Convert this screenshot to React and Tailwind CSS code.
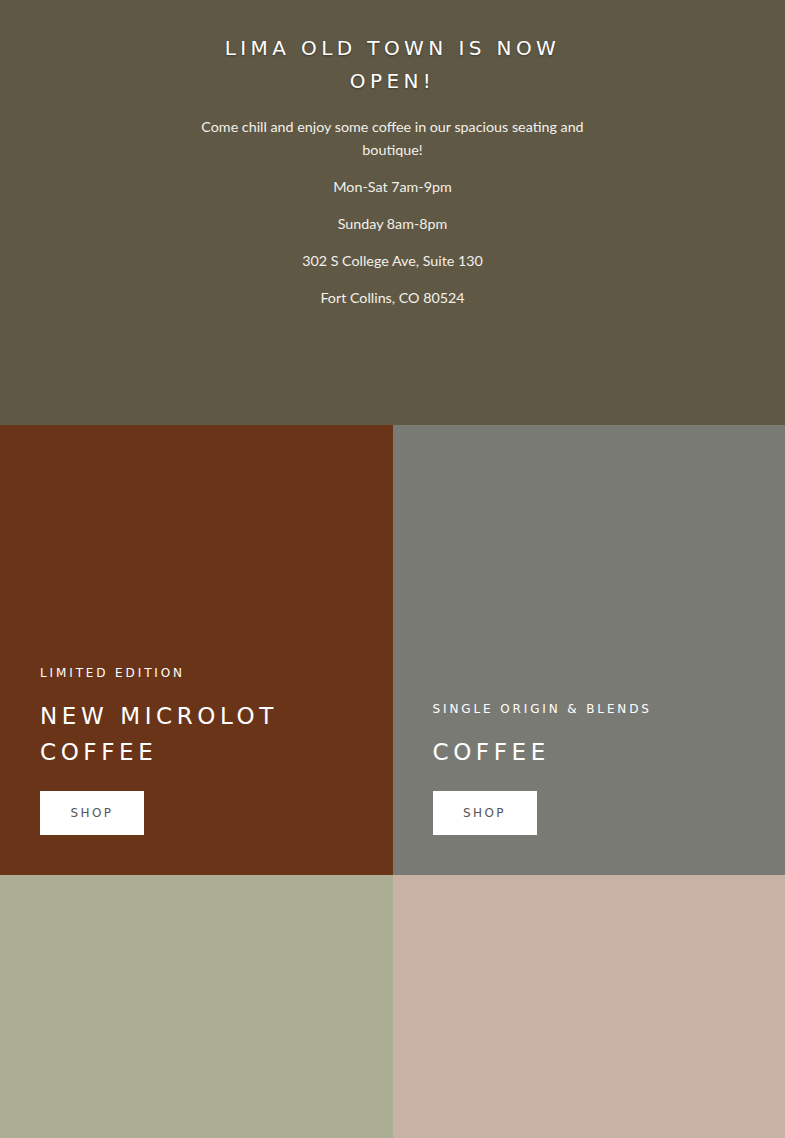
import React from 'react';

const heading = { fontFamily: '"DejaVu Sans", "Liberation Sans", sans-serif' };
const body = { fontFamily: 'Lato, "Open Sans", sans-serif' };

const PromoCard = ({ bg, eyebrow, title }) => (
  <div className={`${bg} h-[450px] flex flex-col justify-end px-10 pb-10`}>
    <p style={heading} className="text-[12px] tracking-[0.24em] uppercase text-white leading-5">
      {eyebrow}
    </p>
    <h2 style={heading} className="mt-[15px] text-[23px] tracking-[0.2em] uppercase text-white leading-9 font-normal">
      {title}
    </h2>
    <div className="mt-[21px]">
      <a href="#" style={heading} className="inline-flex items-center justify-center w-[104px] h-[44px] bg-white text-[12px] tracking-[0.2em] text-[#555] uppercase">
        Shop
      </a>
    </div>
  </div>
);

export default function App() {
  return (
    <div className="w-full bg-white">
      {/* Bannière d'ouverture */}
      <section className="bg-[#5f5845] h-[425px] pt-[32px] text-center text-white">
        <div className="max-w-[400px] mx-auto">
          <h1 style={heading} className="text-[20px] tracking-[0.22em] leading-[33px] uppercase font-normal [text-shadow:0_1px_2px_rgba(0,0,0,0.4)]">
            Lima Old Town is now open!
          </h1>
          <div style={body} className="mt-[17px] text-[14.3px] leading-[23px] text-[#f3f0ea] space-y-[14px]">
            <p>Come chill and enjoy some coffee in our spacious seating and boutique!</p>
            <p>Mon-Sat 7am-9pm</p>
            <p>Sunday 8am-8pm</p>
            <p>302 S College Ave, Suite 130</p>
            <p>Fort Collins, CO 80524</p>
          </div>
        </div>
      </section>

      {/* Grille produits */}
      <section className="grid grid-cols-2">
        <PromoCard bg="bg-[#6a3419]" eyebrow="Limited Edition" title={<>New Microlot<br />Coffee</>} />
        <PromoCard bg="bg-[#7a7a75]" eyebrow="Single Origin & Blends" title="Coffee" />
        <div className="bg-[#abad95] h-[450px]" />
        <div className="bg-[#c8b2a5] h-[450px]" />
      </section>
    </div>
  );
}
